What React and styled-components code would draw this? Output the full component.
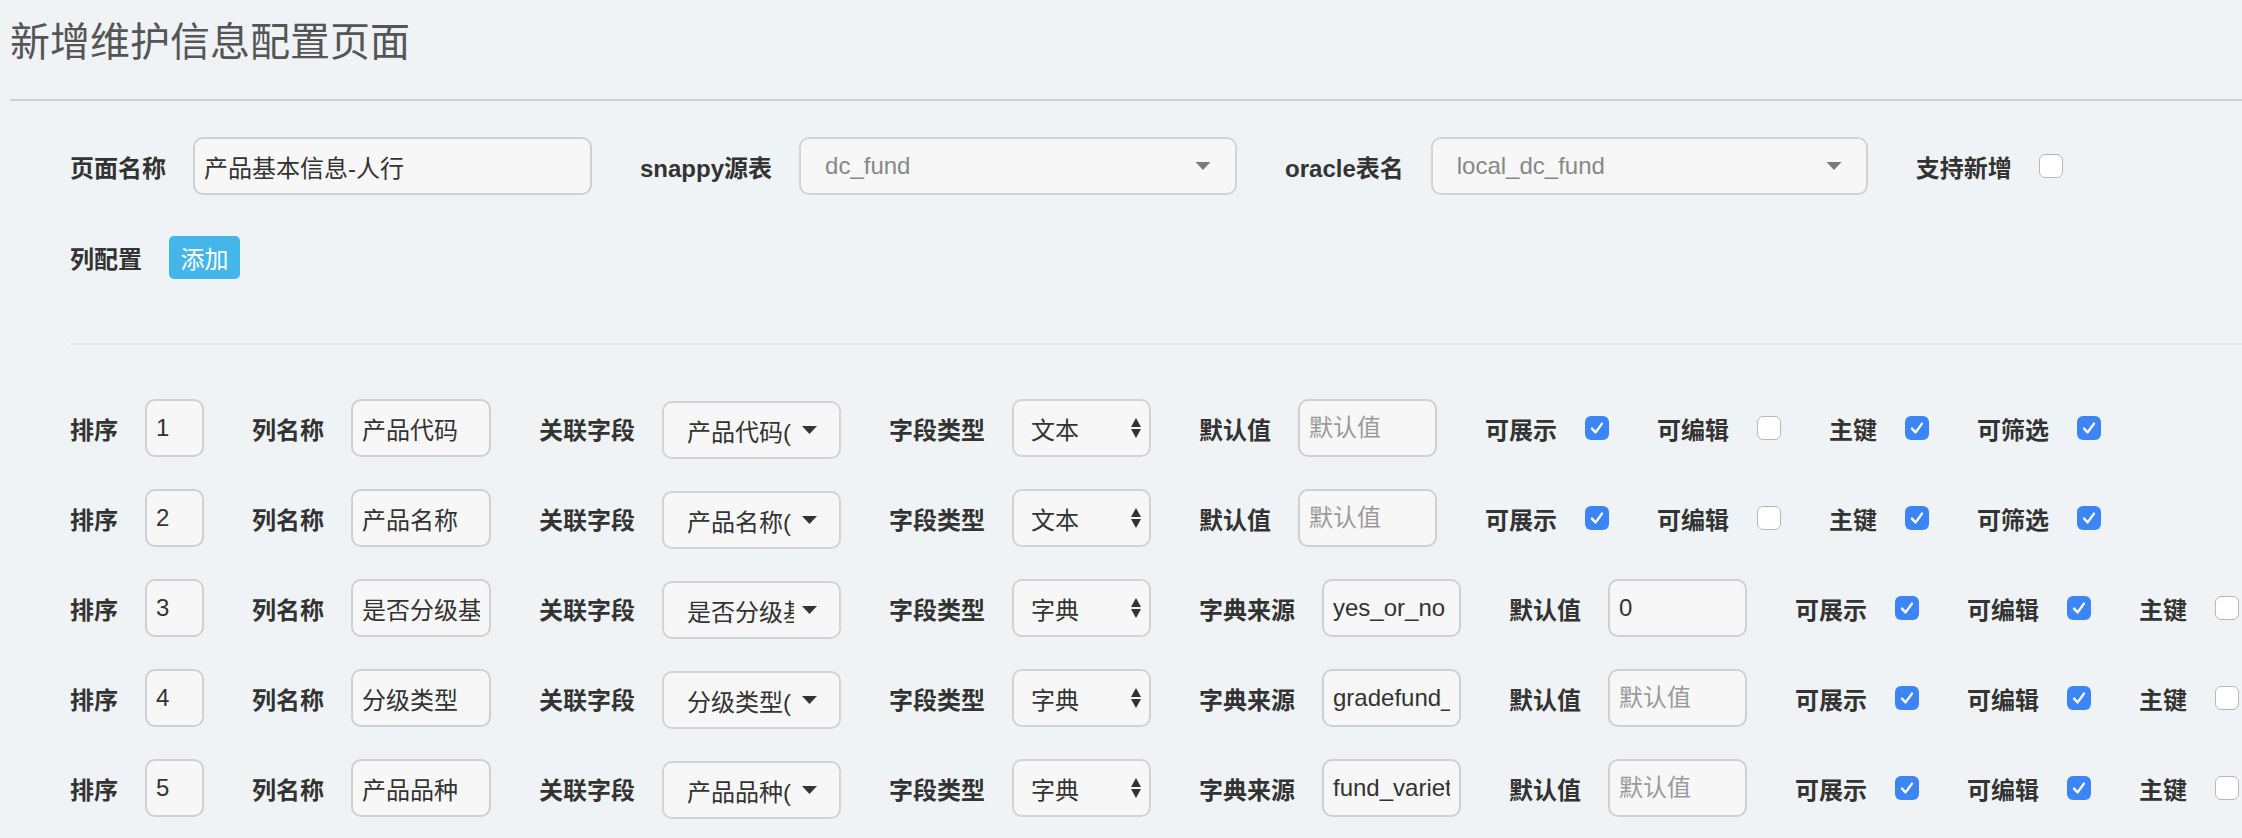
import React from "react";
import styled, { createGlobalStyle } from "styled-components";

const GlobalStyle = createGlobalStyle`
  html, body {
    margin: 0;
    padding: 0;
    background: #f0f3f5;
    overflow: hidden;
  }
  body {
    font-family: "Liberation Sans", "Noto Sans CJK SC", sans-serif;
    color: #333;
  }
  * {
    box-sizing: border-box;
  }
`;

const Page = styled.div`
  padding-left: 10px;
  width: 100vw;
  min-height: 100vh;
`;

const Header = styled.div`
  height: 101px;
  padding-top: 22px;
  border-bottom: 2px solid #cdcfd1;
`;

const Title = styled.h1`
  margin: 0;
  font-size: 40px;
  line-height: 40px;
  font-weight: 400;
  color: #555;
`;

const Form = styled.div`
  padding-left: 60px;
`;

const Row = styled.div`
  display: flex;
  align-items: center;
  gap: 48px;
  height: 58px;
  width: max-content;
  white-space: nowrap;
  margin-top: ${(p) => p.$top || 0}px;
`;

const Group = styled.div`
  display: flex;
  align-items: center;
  flex-shrink: 0;
  gap: ${(p) => (p.$check ? 28 : 27)}px;
`;

const Label = styled.span`
  font-size: 24px;
  font-weight: 700;
  color: #333;
`;

const TextInput = styled.input`
  width: ${(p) => p.$w}px;
  height: 58px;
  padding: 0 9px;
  border: 2px solid #cfd0d1;
  border-radius: 10px;
  background: #f7f7f7;
  font: inherit;
  font-size: 24px;
  color: #333;
  outline: none;

  &::placeholder {
    color: #9a9a9a;
  }
`;

const SelectBox = styled.div`
  display: flex;
  align-items: center;
  width: ${(p) => p.$w}px;
  height: 58px;
  padding: 0 ${(p) => p.$pr}px 0 ${(p) => p.$pl}px;
  border: 2px solid #d2d3d4;
  border-radius: 10px;
  background: #f7f7f7;
  font-size: 24px;
  color: ${(p) => (p.$muted ? "#888" : "#333")};
  margin-top: ${(p) => (p.$shift ? 4 : 0)}px;
`;

const SelectText = styled.span`
  flex: 1;
  overflow: hidden;
  white-space: nowrap;
  margin-right: ${(p) => p.$gap || 0}px;
`;

const AddButton = styled.button`
  width: 71px;
  height: 43px;
  border: none;
  border-radius: 5px;
  background: #44b6ea;
  color: #fff;
  font: inherit;
  font-size: 24px;
  padding: 0;
`;

const Divider = styled.div`
  height: 2px;
  background: #e4e7e9;
  margin-top: 57px;
  margin-bottom: 54px;
`;

const ColumnList = styled.div`
  display: flex;
  flex-direction: column;
  gap: 32px;
`;

const Box = styled.span`
  display: inline-flex;
  align-items: center;
  justify-content: center;
  width: 24px;
  height: 24px;
  border-radius: 6px;
  background: ${(p) => (p.$on ? "#3c85f6" : "#fff")};
  border: ${(p) => (p.$on ? "none" : "1.5px solid #b8b8b8")};
`;

const Caret = ({ color = "#333", w = 15, h = 8 }) => (
  <svg width={w} height={h} viewBox="0 0 15 8">
    <path d="M0 0 L15 0 L7.5 8 Z" fill={color} />
  </svg>
);

const UpDown = () => (
  <svg width="10" height="20" viewBox="0 0 10 20">
    <path d="M5 0 L10 9 L0 9 Z" fill="#333" />
    <path d="M0 11 L10 11 L5 20 Z" fill="#333" />
  </svg>
);

const Check = ({ on }) => (
  <Box $on={on}>
    {on && (
      <svg width="24" height="24" viewBox="0 0 24 24">
        <path
          d="M7 12.6 L10.6 16.4 L17 7.6"
          fill="none"
          stroke="#fff"
          strokeWidth="2.4"
          strokeLinecap="round"
          strokeLinejoin="round"
        />
      </svg>
    )}
  </Box>
);

// the related-field select only shows what fits before the caret
const columns = [
  { sort: "1", name: "产品代码", rel: "产品代码(", type: "文本", def: "", show: true, edit: false, pk: true, filter: true },
  { sort: "2", name: "产品名称", rel: "产品名称(", type: "文本", def: "", show: true, edit: false, pk: true, filter: true },
  { sort: "3", name: "是否分级基金", rel: "是否分级基", type: "字典", dict: "yes_or_no", def: "0", show: true, edit: true, pk: false, filter: true },
  { sort: "4", name: "分级类型", rel: "分级类型(", type: "字典", dict: "gradefund_type", def: "", show: true, edit: true, pk: false, filter: true },
  { sort: "5", name: "产品品种", rel: "产品品种(", type: "字典", dict: "fund_variety", def: "", show: true, edit: true, pk: false, filter: true },
];

const ColumnRow = ({ col }) => (
  <Row>
    <Group>
      <Label>排序</Label>
      <TextInput $w={59} defaultValue={col.sort} />
    </Group>
    <Group>
      <Label>列名称</Label>
      <TextInput $w={140} defaultValue={col.name} />
    </Group>
    <Group>
      <Label>关联字段</Label>
      <SelectBox $w={179} $pl={23} $pr={22} $shift>
        <SelectText $gap={8}>{col.rel}</SelectText>
        <Caret />
      </SelectBox>
    </Group>
    <Group>
      <Label>字段类型</Label>
      <SelectBox $w={139} $pl={17} $pr={8}>
        <SelectText>{col.type}</SelectText>
        <UpDown />
      </SelectBox>
    </Group>
    {col.dict && (
      <Group>
        <Label>字典来源</Label>
        <TextInput $w={139} defaultValue={col.dict} />
      </Group>
    )}
    <Group>
      <Label>默认值</Label>
      <TextInput $w={139} defaultValue={col.def} placeholder="默认值" />
    </Group>
    <Group $check>
      <Label>可展示</Label>
      <Check on={col.show} />
    </Group>
    <Group $check>
      <Label>可编辑</Label>
      <Check on={col.edit} />
    </Group>
    <Group $check>
      <Label>主键</Label>
      <Check on={col.pk} />
    </Group>
    <Group $check>
      <Label>可筛选</Label>
      <Check on={col.filter} />
    </Group>
  </Row>
);

export default function App() {
  return (
    <Page>
      <GlobalStyle />
      <Header>
        <Title>新增维护信息配置页面</Title>
      </Header>
      <Form>
        <Row $top={36}>
          <Group>
            <Label>页面名称</Label>
            <TextInput $w={399} defaultValue="产品基本信息-人行" />
          </Group>
          <Group>
            <Label>snappy源表</Label>
            <SelectBox $w={438} $pl={24} $pr={24} $muted>
              <SelectText>dc_fund</SelectText>
              <Caret color="#7a7a7a" w={16} h={8} />
            </SelectBox>
          </Group>
          <Group>
            <Label>oracle表名</Label>
            <SelectBox $w={437} $pl={24} $pr={24} $muted>
              <SelectText>local_dc_fund</SelectText>
              <Caret color="#7a7a7a" w={16} h={8} />
            </SelectBox>
          </Group>
          <Group>
            <Label>支持新增</Label>
            <Check on={false} />
          </Group>
        </Row>
        <Row $top={33}>
          <Group>
            <Label>列配置</Label>
            <AddButton>添加</AddButton>
          </Group>
        </Row>
        <Divider />
        <ColumnList>
          {columns.map((col) => (
            <ColumnRow key={col.sort} col={col} />
          ))}
        </ColumnList>
      </Form>
    </Page>
  );
}
